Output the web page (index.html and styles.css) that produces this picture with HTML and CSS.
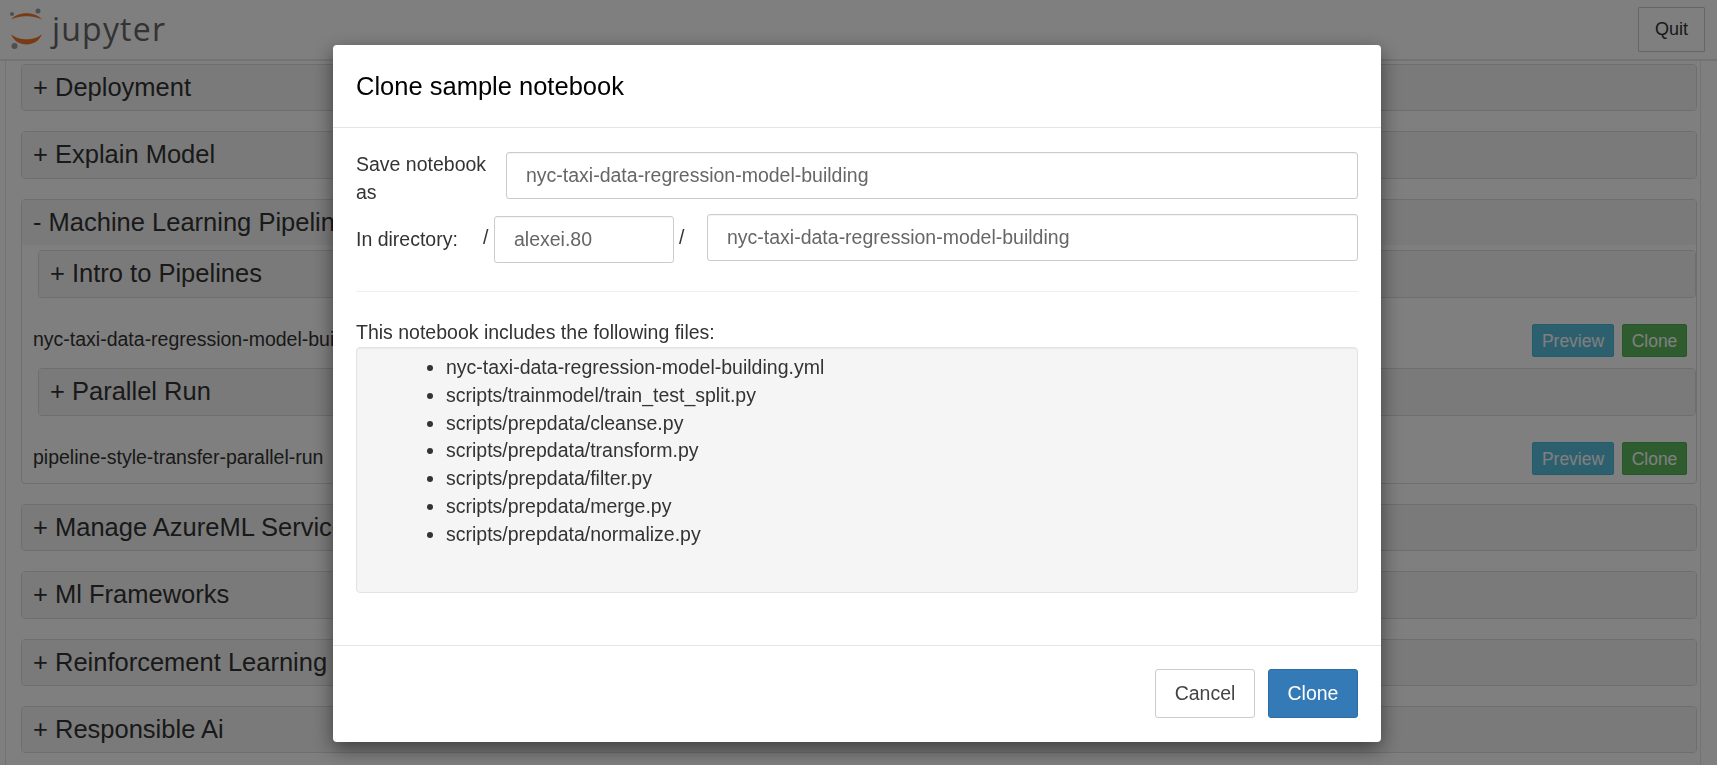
FILE: index.html
```html
<!DOCTYPE html>
<html lang="en">
<head>
    <meta charset="UTF-8">
    <meta name="viewport" content="width=device-width, initial-scale=1.0">
    <title>Clone sample notebook</title>
    <link rel="stylesheet" href="styles.css">
</head>
<body>
    <header class="site-header">
        <div class="logo">
            <svg class="logo-mark" width="44" height="44" viewBox="0 0 44 44">
                <path class="logo-arc" d="M11 13C16 4 37 4 42 13C35 8 18 8 11 13Z"/>
                <path class="logo-arc" d="M11 27C18 34 35 34 42 27C37 41 16 41 11 27Z"/>
                <circle class="logo-dot" cx="12" cy="7" r="2"/>
                <circle class="logo-dot" cx="38" cy="4" r="2.500"/>
                <circle class="logo-dot" cx="14.500" cy="39" r="3"/>
            </svg>
            <span class="logo-text">jupyter</span>
        </div>
        <button class="quit-button">Quit</button>
    </header>

    <main class="container">
        <div class="panel"><div class="panel-heading">+ Deployment</div></div>
        <div class="panel"><div class="panel-heading">+ Explain Model</div></div>
        <div class="panel panel-open">
            <div class="panel-heading">- Machine Learning Pipelines</div>
            <div class="panel nested"><div class="panel-heading">+ Intro to Pipelines</div></div>
            <div class="notebook-row">
                <span>nyc-taxi-data-regression-model-building</span>
                <span class="row-actions">
                    <button class="small-button preview">Preview</button>
                    <button class="small-button clone">Clone</button>
                </span>
            </div>
            <div class="panel nested"><div class="panel-heading">+ Parallel Run</div></div>
            <div class="notebook-row">
                <span>pipeline-style-transfer-parallel-run</span>
                <span class="row-actions">
                    <button class="small-button preview">Preview</button>
                    <button class="small-button clone">Clone</button>
                </span>
            </div>
        </div>
        <div class="panel"><div class="panel-heading">+ Manage AzureML Services</div></div>
        <div class="panel"><div class="panel-heading">+ Ml Frameworks</div></div>
        <div class="panel"><div class="panel-heading">+ Reinforcement Learning</div></div>
        <div class="panel"><div class="panel-heading">+ Responsible Ai</div></div>
    </main>

    <div class="backdrop"></div>

    <div class="modal">
        <div class="modal-header">Clone sample notebook</div>
        <div class="modal-body">
            <div class="form-row save-row">
                <label class="save-label">Save notebook as</label>
                <div class="text-input save-input">nyc-taxi-data-regression-model-building</div>
            </div>
            <div class="form-row dir-row">
                <label class="dir-label">In directory:</label>
                <span class="slash first-slash">/</span>
                <div class="text-input dir-input">alexei.80</div>
                <span class="slash second-slash">/</span>
                <div class="text-input name-input">nyc-taxi-data-regression-model-building</div>
            </div>
            <hr class="divider">
            <p class="files-title">This notebook includes the following files:</p>
            <div class="files-box">
                <ul class="files-list">
                    <li>nyc-taxi-data-regression-model-building.yml</li>
                    <li>scripts/trainmodel/train_test_split.py</li>
                    <li>scripts/prepdata/cleanse.py</li>
                    <li>scripts/prepdata/transform.py</li>
                    <li>scripts/prepdata/filter.py</li>
                    <li>scripts/prepdata/merge.py</li>
                    <li>scripts/prepdata/normalize.py</li>
                </ul>
            </div>
        </div>
        <div class="modal-footer">
            <button class="footer-button cancel">Cancel</button>
            <button class="footer-button primary">Clone</button>
        </div>
    </div>
</body>
</html>
```

FILE: styles.css
```css
* {
    box-sizing: border-box;
}

html, body {
    height: 765px;
    overflow: hidden;
}

body {
    margin: 0;
    background-color: #fff;
    color: #333;
    font-family: "Liberation Sans", Arial, sans-serif;
    font-size: 19.5px;
    line-height: 28px;
}

button {
    font-family: inherit;
}

.site-header {
    display: flex;
    align-items: flex-start;
    justify-content: space-between;
    height: 61px;
    padding: 7px 12px 0 0;
    background-color: #fff;
    border-bottom: 2px solid #e7e7e7;
}

.logo {
    display: flex;
    align-items: center;
    height: 44px;
}

.logo-arc {
    fill: #f37726;
}

.logo-dot {
    fill: #9e9e9e;
}

.logo-text {
    margin-left: 8px;
    color: #666;
    font-family: "Open Sans", sans-serif;
    font-size: 32px;
    letter-spacing: 1.2px;
    line-height: 44px;
}

.quit-button {
    width: 67px;
    height: 45px;
    background-color: #fff;
    border: 1px solid #ccc;
    border-radius: 1px;
    color: #333;
    font-size: 18px;
}

.container {
    display: flex;
    flex-direction: column;
    gap: 20px;
    height: 704px;
    margin: 0 16px 0 5px;
    padding: 3px 3px 0 15px;
    border-left: 1px solid #e7e7e7;
    border-right: 1px solid #e7e7e7;
}

.panel {
    flex: none;
    background-color: #fff;
    border: 1px solid #ddd;
    border-radius: 4px;
}

.panel-heading {
    height: 45.400px;
    padding: 0 11px;
    background-color: #f5f5f5;
    border-radius: 3px;
    color: #333;
    font-size: 25.500px;
    line-height: 45px;
}

.panel-open {
    height: 285px;
}

.panel.nested {
    height: 48px;
    margin: 4.500px 0 0 16px;
}

.panel.nested .panel-heading {
    height: 46px;
}

.notebook-row {
    display: flex;
    align-items: flex-start;
    justify-content: space-between;
    height: 65.500px;
    padding: 27.500px 9px 0 11px;
}

.row-actions {
    display: flex;
    gap: 8px;
    margin-top: -1px;
}

.small-button {
    height: 33px;
    padding: 0;
    border: 1px solid transparent;
    border-radius: 2px;
    color: #fff;
    font-size: 17.500px;
    line-height: 28px;
}

.preview {
    width: 82px;
    background-color: #5bc0de;
    border-color: #46b8da;
}

.clone {
    width: 65px;
    background-color: #5cb85c;
    border-color: #4cae4c;
}

.backdrop {
    position: fixed;
    inset: 0;
    background-color: rgba(0, 0, 0, 0.5);
}

.modal {
    position: fixed;
    top: 45px;
    left: 333px;
    width: 1048px;
    height: 697px;
    background-color: #fff;
    border-radius: 4px;
    box-shadow: 0 7px 20px rgba(0, 0, 0, 0.5);
}

.modal-header {
    height: 83px;
    padding: 24px 23px 0;
    border-bottom: 1px solid #e5e5e5;
    color: #000;
    font-size: 25.500px;
    line-height: 34px;
}

.modal-body {
    height: 517px;
    padding: 0 23.500px 0 23px;
}

.form-row {
    display: flex;
    align-items: flex-start;
}

.save-row {
    height: 71px;
    padding-top: 23.500px;
}

.save-label {
    width: 150px;
    margin-top: -1.500px;
    padding-right: 12px;
}

.text-input {
    height: 47px;
    padding: 0 19px;
    background-color: #fff;
    border: 1px solid #ccc;
    border-radius: 3px;
    box-shadow: inset 0 1px 1px rgba(0, 0, 0, 0.05);
    color: #666;
    line-height: 44px;
}

.save-input {
    flex: 1;
}

.dir-row {
    height: 49px;
    margin-top: 15px;
}

.dir-label {
    width: 127px;
    padding-top: 11px;
}

.slash {
    padding-top: 9px;
}

.first-slash {
    width: 11px;
}

.dir-input {
    width: 180px;
    margin-top: 2px;
}

.second-slash {
    width: 33px;
    padding-left: 5px;
}

.name-input {
    flex: 1;
    line-height: 45px;
}

.divider {
    height: 1px;
    margin: 28px 0 0;
    background-color: #eee;
    border: 0;
}

.files-title {
    margin: 26px 0 0;
    color: #333;
}

.files-box {
    height: 246px;
    margin-top: 1px;
    padding: 6px 0 0;
    background-color: #f5f5f5;
    border: 1px solid #e3e3e3;
    border-radius: 4px;
    box-shadow: inset 0 1px 1px rgba(0, 0, 0, 0.05);
}

.files-list {
    margin: 0;
    padding-left: 89px;
    line-height: 27.800px;
    list-style: disc;
}

.modal-footer {
    display: flex;
    justify-content: flex-end;
    gap: 13px;
    height: 97px;
    padding: 23px 23px 0 0;
    border-top: 1px solid #e5e5e5;
}

.footer-button {
    height: 49px;
    border: 1px solid #ccc;
    border-radius: 3px;
    font-size: 19.500px;
}

.cancel {
    width: 100px;
    background-color: #fff;
    color: #444;
}

.primary {
    width: 90px;
    background-color: #337ab7;
    border-color: #2e6da4;
    color: #fff;
}
```
